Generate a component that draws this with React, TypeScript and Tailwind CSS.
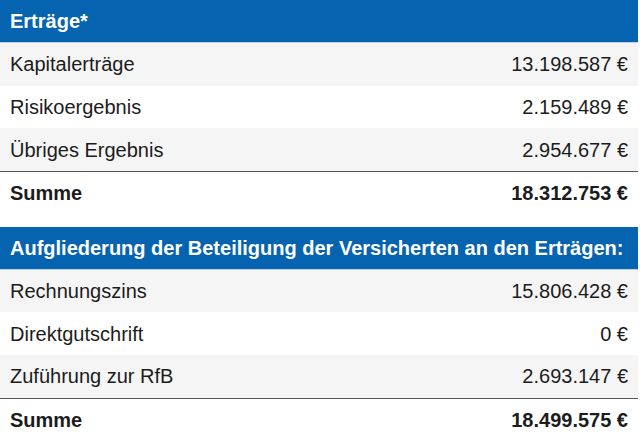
const FONT = { fontFamily: '"Liberation Sans", Arial, Helvetica, sans-serif' };

type Row = { label: string; value: string };

const TABLES: { title: string; rows: Row[]; total: string }[] = [
  {
    title: 'Erträge*',
    rows: [
      { label: 'Kapitalerträge', value: '13.198.587 €' },
      { label: 'Risikoergebnis', value: '2.159.489 €' },
      { label: 'Übriges Ergebnis', value: '2.954.677 €' },
    ],
    total: '18.312.753 €',
  },
  {
    title: 'Aufgliederung der Beteiligung der Versicherten an den Erträgen:',
    rows: [
      { label: 'Rechnungszins', value: '15.806.428 €' },
      { label: 'Direktgutschrift', value: '0 €' },
      { label: 'Zuführung zur RfB', value: '2.693.147 €' },
    ],
    total: '18.499.575 €',
  },
];

function Table({ title, rows, total }: { title: string; rows: Row[]; total: string }) {
  return (
    <div className="mb-3 w-[638px]">
      <div className="flex h-[42px] items-center bg-[#0563b0] px-[10px] text-[20px] font-bold text-white">
        {title}
      </div>
      <div className="h-px bg-[#b9d2ea]" />
      {rows.map((r, i) => (
        <div
          key={r.label}
          className={`flex h-[42.67px] items-center justify-between px-[10px] text-[20px] text-[#1c1c1c] ${
            i % 2 === 0 ? 'bg-[#f5f5f5]' : 'bg-white'
          }`}
        >
          <span>{r.label}</span>
          <span>{r.value}</span>
        </div>
      ))}
      <div className="h-px bg-[#555555]" />
      <div className="flex h-[42.67px] items-center justify-between px-[10px] text-[20px] font-bold text-[#1c1c1c]">
        <span>Summe</span>
        <span>{total}</span>
      </div>
    </div>
  );
}

export default function App() {
  return (
    <div className="min-h-[445px] bg-white" style={FONT}>
      {TABLES.map((t) => (
        <Table key={t.title} {...t} />
      ))}
    </div>
  );
}
